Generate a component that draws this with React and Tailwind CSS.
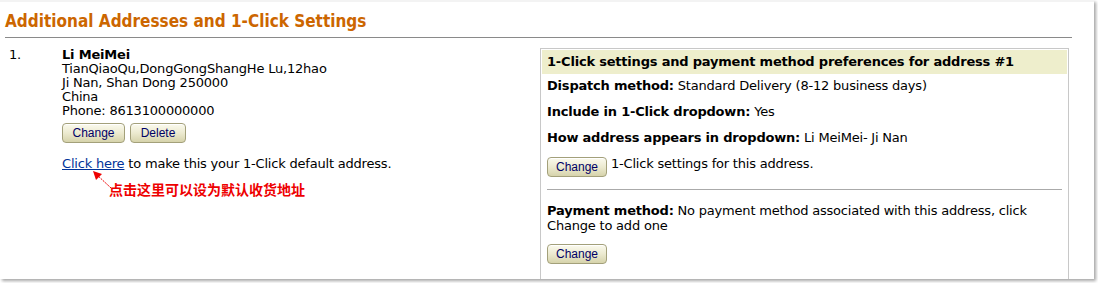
import React from "react";

const Btn = ({ children, w }) => (
  <button
    className={`h-[20px] ${w} rounded-[4px] border border-[#a3a07a] bg-gradient-to-b from-[#fbfaee] via-[#ecead0] to-[#d6d3ab] text-[12px] leading-[18px] tracking-normal text-[#000066] shadow-[inset_0_1px_0_#ffffff]`}
    style={{ fontFamily: '"Liberation Sans", Arial, sans-serif' }}
  >
    {children}
  </button>
);

export default function App() {
  return (
    <div
      className="w-[1098px] h-[283px] bg-white overflow-hidden"
      style={{ fontFamily: '"DejaVu Sans", Verdana, sans-serif' }}
    >
      <div className="relative w-[1094px] h-[279px] bg-white border-t-2 border-[#f3f3f3] shadow-[2px_2px_3px_rgba(0,0,0,0.35)] overflow-hidden">
        <div className="mx-[5px] w-[1067px] border-b border-[#8a8a8a] pt-[9px] pb-[6px]">
          <h1
            className="text-[17px] leading-[20px] font-bold text-[#cc6600]"
            style={{ fontFamily: '"DejaVu Sans Condensed", "Liberation Sans", sans-serif' }}
          >
            Additional Addresses and 1-Click Settings
          </h1>
        </div>
        <div className="flex mt-[10px] text-[13px] tracking-[-0.2px] text-black">
          <div className="w-[62px] pl-[9px] leading-[14px]">1.</div>
          <div className="w-[478px] leading-[14px]">
            <div className="font-bold">Li MeiMei</div>
            <div>TianQiaoQu,DongGongShangHe Lu,12hao</div>
            <div>Ji Nan, Shan Dong 250000</div>
            <div>China</div>
            <div>Phone: 8613100000000</div>
            <div className="flex gap-[5px] mt-[5px]">
              <Btn w="w-[63px]">Change</Btn>
              <Btn w="w-[56px]">Delete</Btn>
            </div>
            <div className="mt-[14px]">
              <a href="#" className="text-[#003399] underline">Click here</a>{" "}
              to make this your 1-Click default address.
            </div>
            <div
              className="mt-[10px] ml-[47px] text-[14px] leading-[16px] tracking-normal font-bold text-[#ee0000]"
              style={{ fontFamily: '"Noto Sans CJK SC", sans-serif' }}
            >
              点击这里可以设为默认收货地址
            </div>
          </div>
          <div className="w-[529px] h-[260px] border border-[#c8c8c8] p-[1px]">
            <div className="h-[24px] bg-[#eeeecc] px-[5px] pt-[5px] leading-[14px] font-bold">
              1-Click settings and payment method preferences for address #1
            </div>
            <div className="px-[5px] leading-[14px]">
              <div className="mt-[5px]">
                <b>Dispatch method:</b> Standard Delivery (8-12 business days)
              </div>
              <div className="mt-[12px]">
                <b>Include in 1-Click dropdown:</b> Yes
              </div>
              <div className="mt-[12px]">
                <b>How address appears in dropdown:</b> Li MeiMei- Ji Nan
              </div>
              <div className="mt-[12px] flex items-start gap-[4px]">
                <Btn w="w-[60px]">Change</Btn>
                <span>1-Click settings for this address.</span>
              </div>
              <div className="mt-[12px] border-t border-[#aaaaaa] w-[515px]" />
              <div className="mt-[13px] leading-[15px]">
                <b>Payment method:</b> No payment method associated with this address, click
                <br />
                Change to add one
              </div>
              <div className="mt-[11px]">
                <Btn w="w-[60px]">Change</Btn>
              </div>
            </div>
          </div>
        </div>
        <svg
          className="absolute left-[88px] top-[164px]"
          width="30"
          height="28"
          viewBox="0 0 30 28"
        >
          <line x1="23" y1="22" x2="8" y2="8" stroke="#ee0000" strokeWidth="1" strokeDasharray="2 1" />
          <polygon points="5,5 14,8 8,14" fill="#ee0000" />
        </svg>
      </div>
    </div>
  );
}
